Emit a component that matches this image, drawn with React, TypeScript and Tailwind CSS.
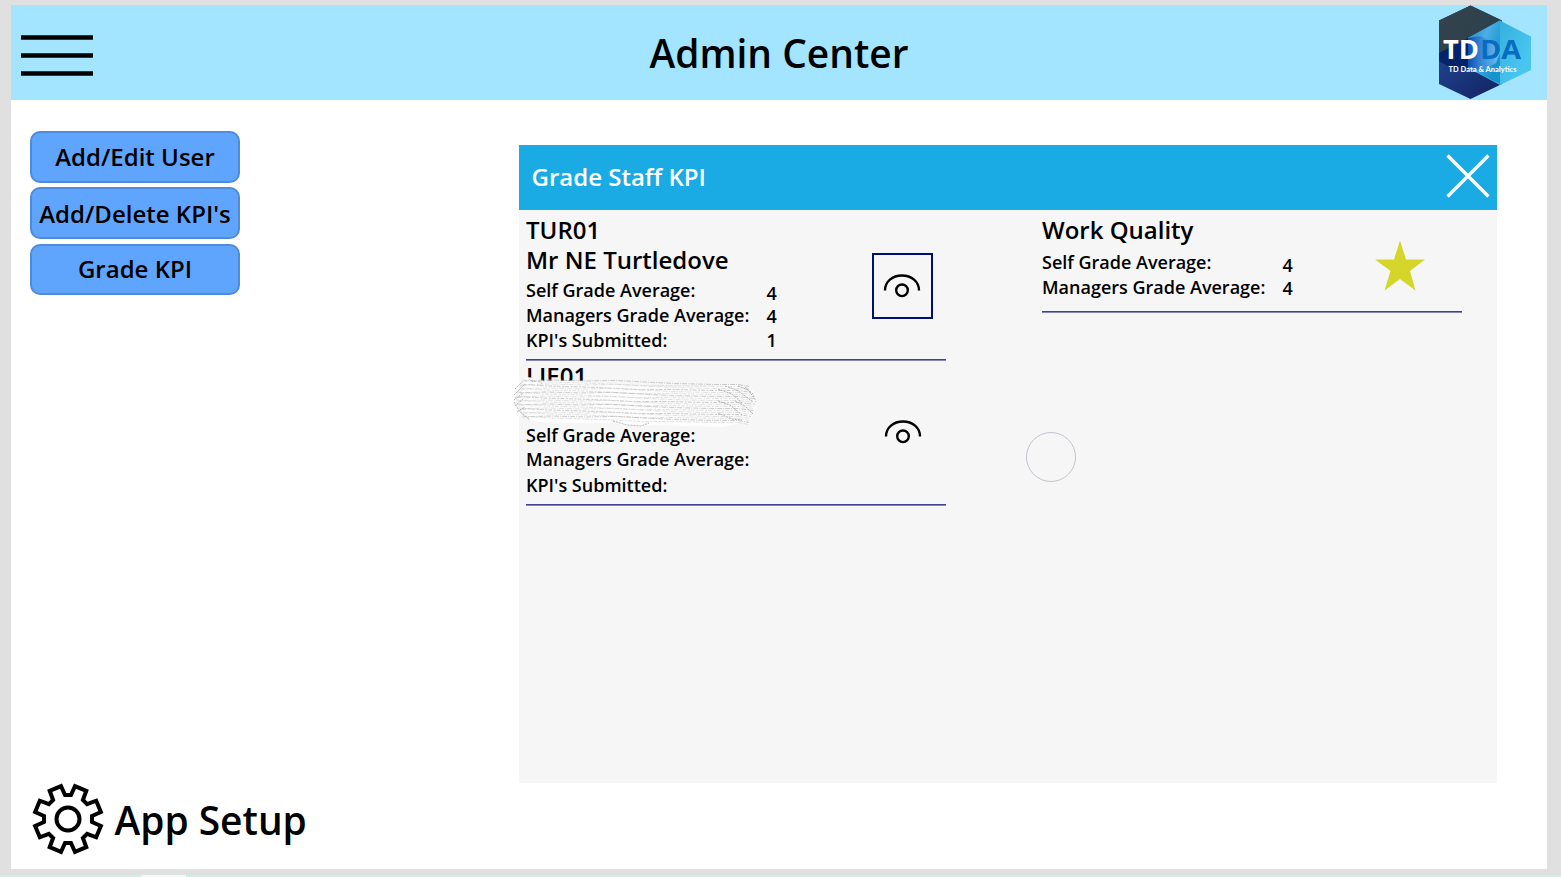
import React from "react";

function MenuIcon() {
  return (
    <svg className="block h-[41px] w-[72px]" viewBox="0 0 72 41" stroke="#000" strokeWidth="4.4">
      <path d="M0 2.500H72M0 20.500H72M0 38.500H72" />
    </svg>
  );
}

function Logo() {
  return (
    <svg className="block h-[95px] w-[94px]" viewBox="0 0 94 95">
      <defs>
        <linearGradient id="dark" x1="0" y1="0" x2="1" y2="0.6">
          <stop offset="0" stopColor="#35434d" />
          <stop offset="1" stopColor="#2a404c" />
        </linearGradient>
        <linearGradient id="navy" x1="0" y1="0" x2="0.6" y2="1">
          <stop offset="0" stopColor="#0a2a72" />
          <stop offset="0.5" stopColor="#1f3f88" />
          <stop offset="1" stopColor="#15296a" />
        </linearGradient>
        <linearGradient id="sky" x1="0" y1="0" x2="1" y2="0.5">
          <stop offset="0" stopColor="#2ba0d2" />
          <stop offset="1" stopColor="#48c6f0" />
        </linearGradient>
        <linearGradient id="mid" x1="0" y1="0" x2="0.9" y2="0.7">
          <stop offset="0" stopColor="#1a86b8" />
          <stop offset="0.5" stopColor="#4aaee6" />
          <stop offset="1" stopColor="#1493cc" />
        </linearGradient>
        <linearGradient id="core" x1="0" y1="0" x2="1" y2="0">
          <stop offset="0" stopColor="#0d4fae" />
          <stop offset="0.45" stopColor="#3a8cdc" />
          <stop offset="1" stopColor="#6cc0ee" />
        </linearGradient>
      </defs>
      <path d="M32.500 0.500L64 15.500V79L32.500 94L1 79V15.500Z" fill="url(#navy)" />
      <path d="M32.500 0.500L64 15.500L1 50V15.500Z" fill="url(#dark)" />
      <path d="M62 15.500L93 31.500V65L62 80L30 63V33Z" fill="url(#sky)" />
      <path d="M62 15.500L30 33V63L62 79Z" fill="url(#mid)" />
      <path d="M5 46L30 33V63L18 66L1 56V48Z" fill="#06226a" />
      <path d="M30 33L42 31L58 38L62 48L58 58L42 66L30 62Z" fill="url(#core)" />
      <text x="5" y="53.500" textLength="36" lengthAdjust="spacingAndGlyphs" className="font-['Open_Sans'] text-[27px] font-bold" fill="#fff">TD</text>
      <text x="42" y="53.500" textLength="41" lengthAdjust="spacingAndGlyphs" className="font-['Open_Sans'] text-[27px] font-bold" fill="#086cc0">DA</text>
      <text x="10.500" y="66.500" textLength="68" lengthAdjust="spacingAndGlyphs" className="font-['Lato'] text-[7px] font-black" fill="#eef8fd">TD Data &amp; Analytics</text>
    </svg>
  );
}

function GearIcon() {
  const pts: string[] = [];
  for (let i = 0; i < 8; i++) {
    const base = i * 45;
    for (const [offset, r] of [[-7, 24.2], [7, 24.2], [12, 33.6], [33, 33.6]]) {
      const a = ((base + offset) * Math.PI) / 180;
      pts.push(`${(36 + r * Math.sin(a)).toFixed(2)},${(36 - r * Math.cos(a)).toFixed(2)}`);
    }
  }
  return (
    <svg className="block h-[72px] w-[72px] shrink-0" viewBox="0 0 72 72" fill="none" stroke="#000" strokeWidth="4">
      <polygon points={pts.join(" ")} />
      <circle cx="36" cy="36" r="11.500" />
    </svg>
  );
}

function EyeIcon() {
  return (
    <svg className="block h-[26px] w-[38px]" viewBox="0 0 38 26" fill="none" stroke="#000" strokeWidth="2.400">
      <path d="M2 17.500C2 8.500 9.500 2.500 19 2.500S36 8.500 36 17.500" />
      <circle cx="19" cy="17.300" r="5.800" />
    </svg>
  );
}

function Scribble() {
  const strokes = Array.from({ length: 20 }, (_, i) => {
    const y = 3 + i * 2;
    const inset = Math.abs(i - 9) * 0.800;
    const w = i % 2 ? 1.200 : -0.600;
    return `M${2 + inset} ${y}l7 ${-w}l22 ${w}l34 1l30 ${w}l28 1.500l32 ${-w + 1}l40 1l${30 - inset} 0l${18 - inset} 2`;
  });
  return (
    <svg className="absolute top-[17px] -left-[13px] h-[52px] w-[246px]" viewBox="0 0 246 52" fill="none">
      <path
        d="M8 3Q13 -1 20 1L27 3.500L70 4L82 6L120 8L150 10L190 10L218 8L235 9Q244 15 244 26Q243 42 232 45L210 50L170 49L140 48L126 50L100 46L65 46L25 45Q10 43 4 34Q-2 23 2 12Z"
        fill="#fdfdfd"
      />
      {strokes.map((d, i) => (
        <path key={i} d={d} stroke={i % 3 ? "#d8d8d8" : "#bdbdbd"} strokeWidth="0.800" strokeDasharray={i % 2 ? "2 1 4 1.500" : "5 1 1 1"} />
      ))}
      <path
        d="M2 12l7-7M1 18l11-11M1 23l9-7M2 29l9-8M4 35l8-5M1 25l6 10l10 8M205 12l14 5l10 9M212 9l12 4l16 12M225 9l10 4l6 8M232 10l8 7l3 8M205 24l12 4l12 10M222 24l10 5l8 8M205 36l14 6l10 1M16 2l4 3l3-1M25 4l5 3M100 44l14 4l14 1l8-3"
        stroke="#acacac"
        strokeWidth="0.900"
        strokeDasharray="2 1"
      />
    </svg>
  );
}

function NavButton({ children, className }: { children: React.ReactNode; className: string }) {
  return (
    <button className={`flex w-[210px] items-center justify-center rounded-[10px] border-2 border-[#4f8bdb] bg-[#60a5fd] text-[24px] leading-[30px] whitespace-nowrap ${className}`}>
      {children}
    </button>
  );
}

function StatRow({ label, value, shift = "", height = "h-[25px]" }: { label: string; value?: string; shift?: string; height?: string }) {
  return (
    <div className={`flex text-[18px] leading-[25px] ${height}`}>
      <span className="w-[240.5px] whitespace-nowrap">{label}</span>
      <span className={shift}>{value}</span>
    </div>
  );
}

function Divider() {
  return <div className="h-[2px] shrink-0 border-t border-[#404490] bg-[#8086b8]" />;
}

function StaffRow({ code, name, stats, selected, redacted }: { code: string; name: string; stats: string[]; selected?: boolean; redacted?: boolean }) {
  return (
    <div className="relative flex h-[145px] w-[420px] flex-col">
      <div className="flex h-[144px] shrink-0 justify-between">
        <div>
          <div className={`text-[24px] leading-[30px] ${redacted ? "h-[31px] pt-px" : "h-[30px]"}`}>{code}</div>
          <div className={`h-[30px] text-[24px] leading-[30px] ${redacted ? "mb-[2px]" : "mb-[3px]"}`}>{name}</div>
          <StatRow label="Self Grade Average:" value={stats[0]} shift="pt-[3px]" height={redacted ? "h-[24px]" : "h-[25px]"} />
          <StatRow label="Managers Grade Average:" value={stats[1]} shift="pt-[1px]" height={redacted ? "h-[26px]" : "h-[25px]"} />
          <StatRow label="KPI's Submitted:" value={stats[2]} />
        </div>
        <div className={`mt-[38px] mr-[13px] flex h-[66px] w-[61px] justify-center border-2 ${selected ? "border-[#001070] pt-[18px] pr-[2px]" : "border-transparent pt-[19px]"}`}>
          <EyeIcon />
        </div>
      </div>
      <Divider />
      {redacted && <Scribble />}
    </div>
  );
}

export default function App() {
  return (
    <div className="flex h-[877px] w-[1561px] flex-col overflow-hidden bg-[#e0e0e0] pt-[5px] font-['Open_Sans','Noto_Sans',sans-serif] font-semibold text-black">
      <div className="ml-[11px] flex h-[864px] w-[1536px] flex-col bg-white">
        <header className="flex h-[95px] shrink-0 items-start justify-between bg-[#a3e5ff] pr-[15px] pl-[10px]">
          <div className="w-[99px] pt-[30px]"><MenuIcon /></div>
          <h1 className="pt-[21px] text-[38.9px] leading-[54px] font-semibold">Admin Center</h1>
          <Logo />
        </header>
        <div className="flex flex-1">
          <aside className="flex w-[508px] flex-col pt-[31px] pl-[19px]">
            <NavButton className="mb-[4px] h-[52px]">Add/Edit User</NavButton>
            <NavButton className="mb-[5px] h-[52px] pt-[2px]">Add/Delete KPI's</NavButton>
            <NavButton className="h-[51px] pb-[2px]">Grade KPI</NavButton>
            <div className="mt-auto mb-[14px] ml-[1.5px] flex items-center gap-[11px]">
              <GearIcon />
              <span className="pt-[2px] text-[38.9px] leading-[54px] whitespace-nowrap">App Setup</span>
            </div>
          </aside>
          <main className="mt-[45px] flex h-[638px] w-[978px] flex-col bg-[#f6f6f6]">
            <div className="flex h-[65px] shrink-0 items-center justify-between bg-[#1aabe5] pr-[7px] pl-[12.5px] text-white">
              <h2 className="pb-[2px] text-[24px] leading-[30px]">Grade Staff KPI</h2>
              <svg className="mt-[-4px] block h-[44px] w-[44px]" viewBox="0 0 44 44" stroke="#fff" strokeWidth="3.200">
                <path d="M1.500 1.500L42.500 42.500M42.500 1.500L1.500 42.500" />
              </svg>
            </div>
            <div className="flex flex-1 gap-[96px] pt-[5px] pl-[7px]">
              <section>
                <StaffRow code="TUR01" name="Mr NE Turtledove" stats={["4", "4", "1"]} selected />
                <StaffRow code="LIE01" name="" stats={[]} redacted />
              </section>
              <section className="relative w-[420px]">
                <div className="flex h-[96px] justify-between">
                  <div>
                    <div className="mb-[5px] h-[30px] text-[24px] leading-[30px]">Work Quality</div>
                    <StatRow label="Self Grade Average:" value="4" shift="pt-[3px]" />
                    <StatRow label="Managers Grade Average:" value="4" shift="pt-[1px]" />
                  </div>
                  <svg className="mt-[24px] mr-[37px] block h-[52px] w-[50px]" viewBox="0 0 50 52" fill="#d5d629">
                    <path d="M25 1.500L31 20.500H50L35 32L40.500 51.500L25 40L9.500 51.500L15.500 32L0 20.500H19Z" />
                  </svg>
                </div>
                <Divider />
                <div className="absolute top-[217px] -left-[16px] h-[50px] w-[50px] rounded-full border border-[#c4c3d0]" />
              </section>
            </div>
          </main>
        </div>
      </div>
      <div className="mt-[6px] flex h-[2px] bg-[#c8f2e3]">
        <div className="ml-[141px] h-[2px] w-[45px] bg-[#effaf6]" />
      </div>
    </div>
  );
}
